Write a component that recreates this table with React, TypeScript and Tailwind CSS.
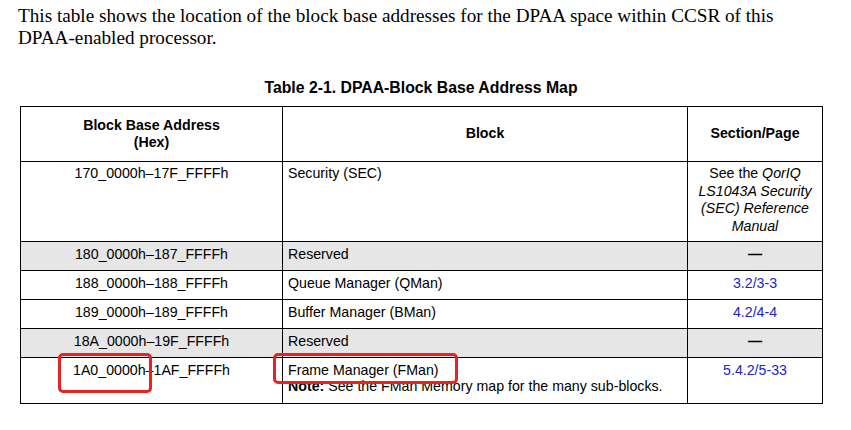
import React from "react";

const sans = { fontFamily: '"Liberation Sans", Arial, sans-serif' };

export default function App() {
  const link = "text-[#2222cc]";
  return (
    <div className="relative w-[851px] h-[430px] bg-white text-black overflow-hidden" style={sans}>
      <p
        className="pl-[18px] pt-[5px] text-[19.2px] leading-[22px]"
        style={{ fontFamily: '"Liberation Serif", "Times New Roman", serif' }}
      >
        This table shows the location of the block base addresses for the DPAA space within CCSR of this
        <br />
        DPAA-enabled processor.
      </p>
      <div className="w-[802px] ml-[20px] mt-[30px] text-center font-bold text-[15.8px] leading-[18px]">
        Table 2-1. DPAA-Block Base Address Map
      </div>
      <table className="ml-[20px] mt-[9px] w-[802px] table-fixed border-collapse text-[14.2px] leading-[17.5px]">
        <colgroup>
          <col className="w-[262px]" />
          <col className="w-[405px]" />
          <col className="w-[135px]" />
        </colgroup>
        <tbody>
          <tr className="h-[55px]">
            <th className="border border-black font-bold align-middle text-center">
              Block Base Address
              <br />
              (Hex)
            </th>
            <th className="border border-black font-bold align-middle text-center">Block</th>
            <th className="border border-black font-bold align-middle text-center">Section/Page</th>
          </tr>
          <tr className="h-[80px]">
            <td className="border border-black align-top text-center pt-[3px]">170_0000h–17F_FFFFh</td>
            <td className="border border-black align-top text-left pt-[3px] pl-[5px]">Security (SEC)</td>
            <td className="border border-black align-top text-center pt-[3px]">
              See the <i>QorIQ</i>
              <br />
              <i>LS1043A Security</i>
              <br />
              <i>(SEC) Reference</i>
              <br />
              <i>Manual</i>
            </td>
          </tr>
          <tr className="h-[29px] bg-[#e6e6e6]">
            <td className="border border-black align-top text-center pt-[4px]">180_0000h–187_FFFFh</td>
            <td className="border border-black align-top text-left pt-[4px] pl-[5px]">Reserved</td>
            <td className="border border-black align-top text-center pt-[4px] font-bold">—</td>
          </tr>
          <tr className="h-[29px]">
            <td className="border border-black align-top text-center pt-[4px]">188_0000h–188_FFFFh</td>
            <td className="border border-black align-top text-left pt-[4px] pl-[5px]">Queue Manager (QMan)</td>
            <td className={`border border-black align-top text-center pt-[4px] ${link}`}>3.2/3-3</td>
          </tr>
          <tr className="h-[29px]">
            <td className="border border-black align-top text-center pt-[4px]">189_0000h–189_FFFFh</td>
            <td className="border border-black align-top text-left pt-[4px] pl-[5px]">Buffer Manager (BMan)</td>
            <td className={`border border-black align-top text-center pt-[4px] ${link}`}>4.2/4-4</td>
          </tr>
          <tr className="h-[29px] bg-[#e6e6e6]">
            <td className="border border-black align-top text-center pt-[4px]">18A_0000h–19F_FFFFh</td>
            <td className="border border-black align-top text-left pt-[4px] pl-[5px]">Reserved</td>
            <td className="border border-black align-top text-center pt-[4px] font-bold">—</td>
          </tr>
          <tr className="h-[46px]">
            <td className="border border-black align-top text-center pt-[4px] leading-[17px]">1A0_0000h–1AF_FFFFh</td>
            <td className="border border-black align-top text-left pt-[4px] pl-[5px] leading-[16px]">
              Frame Manager (FMan)
              <br />
              <span className="font-bold">Note:</span> See the FMan Memory map for the many sub-blocks.
            </td>
            <td className={`border border-black align-top text-center pt-[4px] leading-[17px] ${link}`}>5.4.2/5-33</td>
          </tr>
        </tbody>
      </table>
      <div className="absolute left-[58px] top-[353px] w-[94px] h-[40px] border-[3px] border-[#e8231f] rounded-[5px]" />
      <div className="absolute left-[273px] top-[353px] w-[185px] h-[31px] border-[3px] border-[#e8231f] rounded-[5px]" />
    </div>
  );
}
